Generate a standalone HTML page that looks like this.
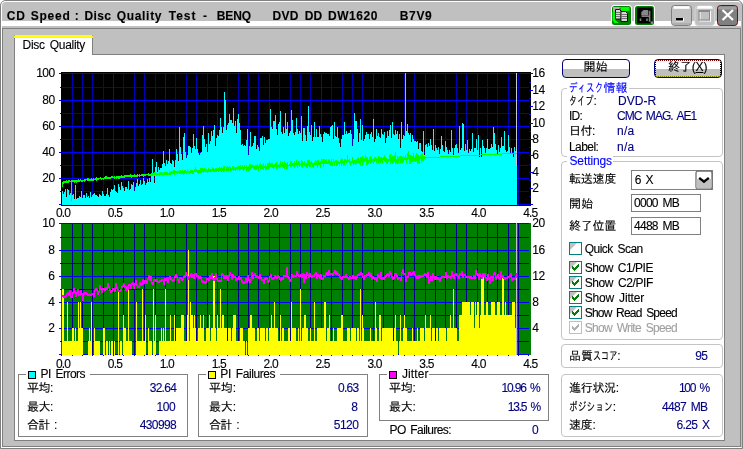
<!DOCTYPE html><html lang="ja"><head><meta charset="utf-8"><title>CD Speed : Disc Quality Test</title><style>
html,body{margin:0;padding:0}
body{width:743px;height:449px;position:relative;overflow:hidden;background:#fff;
font-family:"Liberation Sans","IPAGothic","Noto Sans CJK JP",sans-serif;font-size:12px;line-height:12px;color:#000}
div,span,svg{position:absolute;box-sizing:border-box}
span span{position:static}
.t{white-space:nowrap;line-height:12px;height:12px;word-spacing:2px;-webkit-text-stroke:0.12px}
.gb{border:1px solid #c4c4c4;border-radius:4px}
.sb{border:1px solid #808080}
.ed{border:1px solid #808080;background:#fff}
.cb{width:13px;height:13px;border:1px solid #008080;background:#fff;left:569px;overflow:hidden}
.cb i{position:absolute;left:0;top:0;width:0;height:0;border-top:7px solid #c0c0c0;border-right:7px solid transparent}
.lg{background:#fff;height:12px}
</style></head><body>
<div style="left:0;top:0;width:743px;height:449px;background:#c0c0c0;border-radius:6px 6px 0 0"></div>
<div style="left:0;top:0;width:743px;height:449px;border:1px solid #808080;border-radius:6px 6px 0 0"></div>
<div style="left:1px;top:1px;width:741px;height:447px;border:1px solid #fff;border-right-color:#c0c0c0;border-bottom-color:#fff;border-radius:5px 5px 0 0"></div>
<div style="left:2px;top:21px;width:739px;height:5px;background:#fff"></div>
<div style="left:2px;top:28px;width:739px;height:1px;background:#808080"></div>
<div style="left:2px;top:28px;width:1px;height:419px;background:#808080"></div>
<div style="left:740px;top:28px;width:1px;height:419px;background:#808080"></div>
<div style="left:2px;top:446px;width:739px;height:1px;background:#808080"></div>
<div style="left:14px;top:54px;width:711px;height:387px;background:#fff;border:1px solid #808080;border-left-color:#808080"></div>
<div style="left:14px;top:35px;width:79px;height:20px;background:#fff;border-left:1px solid #808080;border-right:1px solid #808080"></div>
<div style="left:14px;top:35px;width:79px;height:3px;background:#ffff00;border-radius:2px 2px 0 0"></div>
<svg style="left:0;top:0" width="743" height="30" viewBox="0 0 743 30"><rect x="611" y="5" width="21" height="21" rx="3.500" fill="#fff"/><rect x="612" y="6" width="19" height="19" rx="2.500" fill="#008000"/><path d="M613 7h8l-8 8z" fill="#b4a8b4"/><path d="M621 7h8.500v3.500l-3 .5h-5l-1-2zM612.600 12l2.400-1.500v9.500l4 3h-4.500l-1.900-2.500z" fill="#00ff00"/><path d="M615.500 9.500h4l1.500 1.500v8h-5.500z" fill="#d8d8d8" stroke="#101010"/><path d="M621 11.500h4.500l2 2v8h-6.500z" fill="#d8d8d8" stroke="#101010"/><path d="M616 12.500h4M616 14.500h4M616 16.500h4M622 14.500h5M622 16.500h5M622 18.500h5" stroke="#707070"/><rect x="634" y="5" width="21" height="21" rx="3.500" fill="#fff"/><rect x="635" y="6" width="19" height="19" rx="2.500" fill="#008000"/><rect x="637" y="7.500" width="15.500" height="16" fill="#000"/><path d="M643.500 10h4.700v5.400h-6.900v-3.200z" fill="#888"/><path d="M641.500 16.300h8.500M649.600 10.700v11M640.500 18.500v2.500M647 18.500v2.500" stroke="#808080" stroke-width="1.600" fill="none"/><rect x="650.700" y="21.500" width="2.300" height="2.300" fill="#909090"/></svg>
<svg style="left:671px;top:5px" width="22" height="21" viewBox="0 0 22 21"><rect x="0.5" y="0.500" width="20" height="20" rx="3" fill="#c0c0c0" stroke="#808080"/><path d="M2.500 2.500h16" stroke="#fff" stroke-width="2.600"/><path d="M2 19h17" stroke="#a0a0a0" stroke-width="1"/><rect x="5" y="13" width="8" height="3.500" fill="#fff"/><rect x="5" y="13" width="7" height="2.500" fill="#000"/></svg>
<svg style="left:694px;top:5px" width="22" height="21" viewBox="0 0 22 21"><rect x="1" y="1" width="19.500" height="19.500" rx="3" fill="#c0c0c0" stroke="#d4d4d4" stroke-width="1"/><path d="M2.500 3.800c.5-2.300 1.500-2.800 3.500-2.800h9.500c2 0 3 .5 3.500 2.800z" fill="#fff"/><rect x="6" y="6.500" width="10.500" height="9.500" fill="none" stroke="#fff"/><rect x="5" y="5.500" width="10.500" height="9.500" fill="none" stroke="#888"/><path d="M5 6.500h10.500" stroke="#888"/></svg>
<svg style="left:717px;top:5px" width="22" height="21" viewBox="0 0 22 21"><rect x="0.5" y="0.500" width="20" height="20" rx="3" fill="#808080" stroke="#900000"/><rect x="1.500" y="1.500" width="18" height="3" rx="1" fill="#a0a0a0"/><path d="M3 20.500h15" stroke="#800080" stroke-width="1"/><path d="M5.500 5l10.500 10M16 5l-10.500 10" stroke="#fff" stroke-width="2.200" fill="none"/></svg>
<div style="left:562px;top:59px;width:68px;height:19px;border:1px solid #000080;border-radius:4px;background:linear-gradient(#fff 0,#fff 52%,#c0c0c0 52%)"></div>
<div style="left:654px;top:59px;width:68px;height:19px;border:1px solid #000080;border-radius:4px;background:linear-gradient(#fff 0,#fff 52%,#c0c0c0 52%)"></div>
<div style="left:655px;top:60px;width:66px;height:17px;border:1px dotted #000;border-top-color:#800000;border-bottom-color:#808000"></div>
<div class="gb" style="left:561px;top:88px;width:162px;height:69px"></div>
<div class="gb" style="left:561px;top:161px;width:162px;height:179px"></div>
<div class="gb" style="left:561px;top:344px;width:162px;height:24px"></div>
<div class="gb" style="left:561px;top:374px;width:162px;height:63px"></div>
<div class="lg" style="left:567px;top:82px;width:62px"></div>
<div class="lg" style="left:567px;top:156px;width:46px"></div>
<div class="ed" style="left:631px;top:170px;width:82px;height:20px"></div>
<svg style="left:695px;top:170px" width="18" height="20" viewBox="0 0 18 20"><rect x="1" y="1" width="16" height="18" rx="2" fill="#fff" stroke="#707070" stroke-width="1.300" shape-rendering="auto"/><path d="M1.500 9h15v8.500a1 1 0 0 1-1 1h-13a1 1 0 0 1-1-1z" fill="#c0c0c0"/><path d="M4.200 7.800l4.800 4l4.800-4" stroke="#000" stroke-width="2.300" fill="none" shape-rendering="auto"/></svg>
<div class="ed" style="left:631px;top:194px;width:70px;height:18px"></div>
<div class="ed" style="left:631px;top:217px;width:70px;height:18px"></div>
<div class="cb" style="top:242px;"><i></i></div>
<div class="cb" style="top:261px;"><i></i><svg style="left:2px;top:2px" width="7" height="7" viewBox="0 0 7 7"><path d="M0 2h1v1h1v1h1v-1h1v-1h1v-1h1v-1h1v3h-1v1h-1v1h-1v1h-1v1h-1v-1h-1v-1h-1z" fill="#008000"/></svg></div>
<div class="cb" style="top:276px;"><i></i><svg style="left:2px;top:2px" width="7" height="7" viewBox="0 0 7 7"><path d="M0 2h1v1h1v1h1v-1h1v-1h1v-1h1v-1h1v3h-1v1h-1v1h-1v1h-1v1h-1v-1h-1v-1h-1z" fill="#008000"/></svg></div>
<div class="cb" style="top:291px;"><i></i><svg style="left:2px;top:2px" width="7" height="7" viewBox="0 0 7 7"><path d="M0 2h1v1h1v1h1v-1h1v-1h1v-1h1v-1h1v3h-1v1h-1v1h-1v1h-1v1h-1v-1h-1v-1h-1z" fill="#008000"/></svg></div>
<div class="cb" style="top:306px;"><i></i><svg style="left:2px;top:2px" width="7" height="7" viewBox="0 0 7 7"><path d="M0 2h1v1h1v1h1v-1h1v-1h1v-1h1v-1h1v3h-1v1h-1v1h-1v1h-1v1h-1v-1h-1v-1h-1z" fill="#008000"/></svg></div>
<div class="cb" style="top:321px;border-color:#c0c0c0;"><svg style="left:2px;top:2px" width="7" height="7" viewBox="0 0 7 7"><path d="M0 2h1v1h1v1h1v-1h1v-1h1v-1h1v-1h1v3h-1v1h-1v1h-1v1h-1v1h-1v-1h-1v-1h-1z" fill="#b0b0b0"/></svg></div>
<div class="sb" style="left:18px;top:374px;width:170px;height:63px"></div>
<div class="sb" style="left:198px;top:374px;width:170px;height:63px"></div>
<div class="sb" style="left:379px;top:374px;width:170px;height:47px"></div>
<div class="lg" style="left:26px;top:369px;width:64px"></div>
<div style="left:28px;top:371px;width:8px;height:8px;background:#00ffff;border:1px solid #000"></div>
<div class="lg" style="left:206px;top:369px;width:74px"></div>
<div style="left:208px;top:371px;width:8px;height:8px;background:#ffff00;border:1px solid #000"></div>
<div class="lg" style="left:387px;top:369px;width:42px"></div>
<div style="left:389px;top:371px;width:8px;height:8px;background:#ff00ff;border:1px solid #000"></div>
<svg width="743" height="449" viewBox="0 0 743 449" shape-rendering="crispEdges" style="position:absolute;left:0;top:0">
<rect x="61" y="72" width="470" height="134" fill="#000"/>
<path d="M61 87h468v1h-468zM61 113h468v1h-468zM61 139h468v1h-468zM61 165h468v1h-468zM61 191h468v1h-468zM72 73h1v132h-1zM82 73h1v132h-1zM92 73h1v132h-1zM103 73h1v132h-1zM123 73h1v132h-1zM134 73h1v132h-1zM144 73h1v132h-1zM155 73h1v132h-1zM175 73h1v132h-1zM186 73h1v132h-1zM196 73h1v132h-1zM207 73h1v132h-1zM227 73h1v132h-1zM238 73h1v132h-1zM248 73h1v132h-1zM258 73h1v132h-1zM279 73h1v132h-1zM290 73h1v132h-1zM300 73h1v132h-1zM310 73h1v132h-1zM331 73h1v132h-1zM342 73h1v132h-1zM352 73h1v132h-1zM362 73h1v132h-1zM383 73h1v132h-1zM393 73h1v132h-1zM404 73h1v132h-1zM414 73h1v132h-1zM435 73h1v132h-1zM445 73h1v132h-1zM456 73h1v132h-1zM466 73h1v132h-1zM487 73h1v132h-1zM497 73h1v132h-1zM508 73h1v132h-1zM518 73h1v132h-1z" fill="#0000b4"/>
<path d="M61 73h468v1h-468zM61 100h468v1h-468zM61 126h468v1h-468zM61 152h468v1h-468zM61 178h468v1h-468zM61 204h468v1h-468zM113 73h1v132h-1zM165 73h1v132h-1zM217 73h1v132h-1zM269 73h1v132h-1zM321 73h1v132h-1zM373 73h1v132h-1zM425 73h1v132h-1zM477 73h1v132h-1z" fill="#00f"/>
<path d="M59 73h2v1h-2zM60 87h1v1h-1zM59 100h2v1h-2zM60 113h1v1h-1zM59 126h2v1h-2zM60 139h1v1h-1zM59 152h2v1h-2zM60 165h1v1h-1zM59 178h2v1h-2zM60 191h1v1h-1zM59 204h2v1h-2zM529 204h4v1h-4zM529 196h2v1h-2zM529 188h4v1h-4zM529 180h2v1h-2zM529 172h4v1h-4zM529 164h2v1h-2zM529 155h4v1h-4zM529 147h2v1h-2zM529 139h4v1h-4zM529 131h2v1h-2zM529 123h4v1h-4zM529 114h2v1h-2zM529 106h4v1h-4zM529 98h2v1h-2zM529 90h4v1h-4zM529 82h2v1h-2zM529 73h4v1h-4z" fill="#00f"/>
<rect x="516" y="73" width="1" height="132" fill="#c8c8c8"/>
<path d="M62 205V191h1V194h1V192h1V189h1V197h1V189h1V190h1V195h1V193h1h1V195h1V194h1V199h1V185h1V199h1V198h1h1V196h1V197h1V191h1V198h1V195h1h1V198h1V193h1V197h1V196h1V198h1V192h1V197h1V195h1V194h1V193h1V195h1h1V196h1V197h1V194h1V195h1V196h1V191h1V194h1V196h1h1V194h1V188h1V195h1V197h1V192h1V189h1V190h1V189h1V185h1V191h1V192h1V193h1V184h1V187h1V190h1V182h1V186h1V188h1V191h1V187h1h1V189h1V181h1V190h1V189h1V184h1V185h1V182h1V191h1V187h1V183h1V179h1V186h1V184h1V180h1V185h1V184h1V178h1V181h1V185h1V183h1V179h1V182h1V178h1V182h1V176h1V159h1V175h1V183h1V167h1V162h1V172h1V167h1V170h1V168h1h1V164h1V151h1V163h1V166h1V160h1V164h1V161h1V149h1V163h1V164h1V160h1V161h1V167h1V160h1V149h1V154h1V161h1V127h1V147h1V154h1V160h1V137h1V133h1V152h1V158h1V155h1V146h1h1V147h1V153h1V148h1V134h1V146h1V149h1V138h1V149h1V153h1V155h1V153h1V152h1V135h1V126h1V139h1V147h1V144h1V152h1V133h1V144h1V141h1V131h1V136h1V130h1V125h1V146h1V138h1V135h1V136h1V130h1V118h1V127h1V133h1V127h1V92h1V100h1V130h1V125h1V123h1V114h1V120h1h1V123h1V108h1V126h1V121h1V133h1V119h1V114h1V123h1V130h1V145h1V144h1V146h1V145h1V146h1V140h1V129h1V155h1V146h1V132h1V147h1V146h1V143h1V136h1h1V149h1V145h1V147h1V151h1V138h1h1V136h1V145h1V137h1V143h1V140h1h1V139h1h1V109h1V127h1V129h1V121h1h1V115h1V129h1V135h1V124h1V122h1V111h1V132h1V134h1V127h1V133h1V113h1V129h1V122h1V136h1V133h1V131h1V110h1V120h1V133h1V135h1V132h1V118h1V129h1V134h1V131h1V133h1V116h1V141h1V128h1h1V135h1V141h1V126h1V106h1V132h1V135h1V125h1V141h1V137h1V122h1V137h1V129h1V137h1h1V126h1V134h1V137h1V142h1V134h1V132h1V133h1h1V134h1h1V136h1V127h1V126h1V125h1V139h1V122h1V136h1V137h1V127h1V138h1V143h1V147h1V139h1V135h1h1V122h1V134h1V131h1V134h1V133h1h1V130h1V134h1V146h1V139h1V113h1V121h1h1V129h1V142h1V133h1V119h1V140h1V125h1V141h1V139h1V135h1V132h1V134h1h1V139h1V134h1V132h1V137h1V119h1V142h1V139h1V129h1V136h1V133h1V137h1V138h1V129h1V134h1V135h1V132h1V143h1V138h1V131h1V136h1V130h1V125h1V138h1V122h1V134h1V135h1V130h1V134h1V131h1V139h1V134h1V148h1V122h1V139h1V135h1V136h1V73h1V131h1V124h1V133h1V135h1V133h1V142h1V135h1V139h1V141h1h1V142h1V141h1V149h1V143h1h1V151h1V152h1V131h1V155h1V145h1V144h1V147h1V143h1V146h1V139h1V145h1V150h1V129h1V151h1V145h1V148h1V150h1V147h1V154h1V149h1V136h1V145h1V151h1V152h1V141h1V147h1V150h1V154h1V150h1V152h1V130h1V148h1V155h1V148h1V145h1V144h1V148h1V153h1V126h1V150h1V148h1V123h1V124h1V151h1V144h1V150h1V140h1V153h1V149h1V151h1V149h1V133h1V152h1V148h1h1V139h1V150h1V135h1V157h1V148h1V157h1V140h1V146h1V148h1V153h1V148h1V139h1V149h1h1V148h1V144h1V147h1V127h1V133h1V144h1V150h1V154h1V145h1V152h1V148h1V137h1V146h1h1V131h1V150h1V152h1V151h1V135h1V147h1V153h1V148h1V153h1V157h1V147h1V151h1V166h1V205z" fill="#0ff"/>
<path d="M62 182h1v5h-1zM63 181h1v3h-1zM64 181h1v2h-1zM65 181h1v2h-1zM66 180h1v3h-1zM67 181h1v2h-1zM68 180h1v3h-1zM69 180h1v2h-1zM70 181h1v1h-1zM71 180h1v3h-1zM72 180h1v2h-1zM73 180h1v2h-1zM74 180h1v3h-1zM75 180h1v2h-1zM76 180h1v3h-1zM77 180h1v2h-1zM78 179h1v3h-1zM79 180h1v2h-1zM80 179h1v2h-1zM81 180h1v2h-1zM82 180h1v2h-1zM83 180h1v1h-1zM84 179h1v3h-1zM85 179h1v2h-1zM86 179h1v1h-1zM87 178h1v3h-1zM88 178h1v3h-1zM89 179h1v2h-1zM90 179h1v2h-1zM91 178h1v3h-1zM92 179h1v2h-1zM93 178h1v3h-1zM94 179h1v1h-1zM95 178h1v2h-1zM96 177h1v4h-1zM97 178h1v2h-1zM98 178h1v2h-1zM99 178h1v1h-1zM100 177h1v2h-1zM101 178h1v2h-1zM102 178h1v1h-1zM103 178h1v2h-1zM104 177h1v2h-1zM105 176h1v3h-1zM106 176h1v3h-1zM107 177h1v2h-1zM108 177h1v2h-1zM109 177h1v2h-1zM110 177h1v2h-1zM111 176h1v2h-1zM112 176h1v2h-1zM113 177h1v1h-1zM114 176h1v3h-1zM115 177h1v1h-1zM116 176h1v3h-1zM117 176h1v2h-1zM118 176h1v3h-1zM119 176h1v3h-1zM120 176h1v2h-1zM121 175h1v3h-1zM122 176h1v2h-1zM123 176h1v2h-1zM124 175h1v3h-1zM125 175h1v2h-1zM126 175h1v2h-1zM127 175h1v2h-1zM128 175h1v2h-1zM129 175h1v2h-1zM130 174h1v3h-1zM131 175h1v3h-1zM132 175h1v2h-1zM133 175h1v2h-1zM134 174h1v3h-1zM135 175h1v2h-1zM136 175h1v2h-1zM137 174h1v3h-1zM138 175h1v1h-1zM139 174h1v3h-1zM140 175h1v1h-1zM141 174h1v2h-1zM142 174h1v2h-1zM143 174h1v3h-1zM144 174h1v2h-1zM145 174h1v2h-1zM146 174h1v1h-1zM147 174h1v1h-1zM148 173h1v3h-1zM149 174h1v2h-1zM150 174h1v2h-1zM151 173h1v3h-1zM152 173h1v3h-1zM153 173h1v2h-1zM154 172h1v4h-1zM155 172h1v3h-1zM156 173h1v3h-1zM157 173h1v2h-1zM158 173h1v2h-1zM159 172h1v4h-1zM160 172h1v3h-1zM161 172h1v3h-1zM162 173h1v2h-1zM163 172h1v3h-1zM164 172h1v3h-1zM165 172h1v3h-1zM166 172h1v3h-1zM167 172h1v3h-1zM168 173h1v2h-1zM169 171h1v4h-1zM170 172h1v3h-1zM171 171h1v3h-1zM172 171h1v3h-1zM173 170h1v4h-1zM174 170h1v5h-1zM175 171h1v2h-1zM176 171h1v2h-1zM177 171h1v3h-1zM178 171h1v2h-1zM179 170h1v4h-1zM180 170h1v4h-1zM181 171h1v3h-1zM182 170h1v4h-1zM183 171h1v4h-1zM184 170h1v4h-1zM185 170h1v3h-1zM186 171h1v3h-1zM187 169h1v4h-1zM188 171h1v2h-1zM189 171h1v3h-1zM190 170h1v3h-1zM191 170h1v3h-1zM192 170h1v4h-1zM193 171h1v3h-1zM194 169h1v3h-1zM195 167h1v5h-1zM196 169h1v3h-1zM197 170h1v3h-1zM198 170h1v4h-1zM199 170h1v3h-1zM200 168h1v5h-1zM201 168h1v5h-1zM202 168h1v4h-1zM203 169h1v4h-1zM204 168h1v4h-1zM205 169h1v3h-1zM206 169h1v3h-1zM207 170h1v3h-1zM208 168h1v4h-1zM209 169h1v3h-1zM210 169h1v3h-1zM211 169h1v3h-1zM212 167h1v4h-1zM213 168h1v4h-1zM214 169h1v3h-1zM215 168h1v4h-1zM216 168h1v4h-1zM217 169h1v2h-1zM218 168h1v4h-1zM219 167h1v4h-1zM220 168h1v3h-1zM221 167h1v5h-1zM222 168h1v3h-1zM223 166h1v6h-1zM224 166h1v5h-1zM225 169h1v1h-1zM226 167h1v4h-1zM227 166h1v5h-1zM228 167h1v4h-1zM229 166h1v4h-1zM230 167h1v4h-1zM231 168h1v3h-1zM232 166h1v4h-1zM233 166h1v5h-1zM234 167h1v3h-1zM235 167h1v4h-1zM236 167h1v3h-1zM237 166h1v4h-1zM238 166h1v3h-1zM239 166h1v5h-1zM240 165h1v5h-1zM241 167h1v2h-1zM242 165h1v4h-1zM243 167h1v4h-1zM244 165h1v4h-1zM245 167h1v1h-1zM246 165h1v6h-1zM247 167h1v3h-1zM248 166h1v5h-1zM249 164h1v6h-1zM250 164h1v6h-1zM251 165h1v3h-1zM252 165h1v3h-1zM253 165h1v4h-1zM254 166h1v4h-1zM255 165h1v5h-1zM256 165h1v5h-1zM257 164h1v5h-1zM258 166h1v5h-1zM259 164h1v4h-1zM260 163h1v7h-1zM261 165h1v4h-1zM262 165h1v4h-1zM263 163h1v7h-1zM264 166h1v2h-1zM265 164h1v6h-1zM266 166h1v4h-1zM267 163h1v6h-1zM268 163h1v6h-1zM269 161h1v7h-1zM270 163h1v4h-1zM271 163h1v4h-1zM272 163h1v5h-1zM273 165h1v4h-1zM274 164h1v3h-1zM275 163h1v4h-1zM276 162h1v7h-1zM277 164h1v4h-1zM278 165h1v2h-1zM279 164h1v4h-1zM280 161h1v6h-1zM281 164h1v2h-1zM282 162h1v5h-1zM283 164h1v4h-1zM284 161h1v8h-1zM285 163h1v4h-1zM286 163h1v6h-1zM287 162h1v7h-1zM288 165h1v1h-1zM289 164h1v2h-1zM290 161h1v6h-1zM291 161h1v5h-1zM292 163h1v3h-1zM293 163h1v4h-1zM294 161h1v7h-1zM295 163h1v3h-1zM296 160h1v6h-1zM297 163h1v5h-1zM298 161h1v4h-1zM299 161h1v6h-1zM300 164h1v1h-1zM301 160h1v7h-1zM302 161h1v7h-1zM303 163h1v2h-1zM304 161h1v5h-1zM305 164h1v3h-1zM306 163h1v5h-1zM307 160h1v8h-1zM308 160h1v6h-1zM309 160h1v7h-1zM310 162h1v5h-1zM311 161h1v4h-1zM312 163h1v4h-1zM313 163h1v5h-1zM314 162h1v3h-1zM315 160h1v5h-1zM316 161h1v4h-1zM317 160h1v8h-1zM318 160h1v5h-1zM319 162h1v3h-1zM320 161h1v7h-1zM321 159h1v5h-1zM322 159h1v5h-1zM323 159h1v8h-1zM324 159h1v5h-1zM325 160h1v4h-1zM326 159h1v5h-1zM327 162h1v2h-1zM328 159h1v5h-1zM329 160h1v5h-1zM330 161h1v5h-1zM331 159h1v7h-1zM332 162h1v4h-1zM333 159h1v4h-1zM334 161h1v5h-1zM335 160h1v3h-1zM336 160h1v6h-1zM337 161h1v5h-1zM338 161h1v3h-1zM339 162h1v3h-1zM340 160h1v3h-1zM341 158h1v8h-1zM342 159h1v5h-1zM343 161h1v5h-1zM344 159h1v6h-1zM345 159h1v3h-1zM346 160h1v3h-1zM347 155h1v7h-1zM348 160h1v2h-1zM349 159h1v5h-1zM350 161h1v5h-1zM351 161h1v2h-1zM352 157h1v6h-1zM353 160h1v5h-1zM354 160h1v4h-1zM355 160h1v5h-1zM356 159h1v5h-1zM357 158h1v5h-1zM358 157h1v6h-1zM359 159h1v5h-1zM360 157h1v9h-1zM361 157h1v5h-1zM362 156h1v10h-1zM363 159h1v5h-1zM364 158h1v4h-1zM365 155h1v6h-1zM366 157h1v8h-1zM367 157h1v8h-1zM368 160h1v4h-1zM369 157h1v5h-1zM370 156h1v8h-1zM371 158h1v5h-1zM372 159h1v3h-1zM373 159h1v5h-1zM374 157h1v5h-1zM375 157h1v4h-1zM376 158h1v5h-1zM377 159h1v2h-1zM378 156h1v7h-1zM379 157h1v5h-1zM380 157h1v6h-1zM381 157h1v5h-1zM382 158h1v5h-1zM383 157h1v3h-1zM384 155h1v6h-1zM385 157h1v5h-1zM386 158h1v6h-1zM387 159h1v5h-1zM388 159h1v3h-1zM389 155h1v6h-1zM390 154h1v10h-1zM391 157h1v5h-1zM392 156h1v8h-1zM393 156h1v7h-1zM394 155h1v7h-1zM395 152h1v12h-1zM396 159h1v4h-1zM397 156h1v8h-1zM398 157h1v6h-1zM399 156h1v5h-1zM400 156h1v7h-1zM401 156h1v6h-1zM402 157h1v6h-1zM403 156h1v6h-1zM404 157h1v3h-1zM405 155h1v5h-1zM406 157h1v6h-1zM407 153h1v7h-1zM408 151h1v8h-1zM409 155h1v9h-1zM410 155h1v9h-1zM411 155h1v7h-1zM412 156h1v6h-1zM413 153h1v9h-1zM414 157h1v4h-1zM415 155h1v7h-1zM416 153h1v8h-1zM417 154h1v10h-1zM418 155h1v8h-1zM419 156h1v8h-1zM420 155h1v4h-1zM421 154h1v9h-1zM422 153h1v8h-1zM423 156h1v5h-1zM424 156h1v3h-1zM425 157h1v1h-1zM426 157h1v1h-1zM427 157h1v1h-1zM428 157h1v1h-1zM429 157h1v1h-1zM430 157h1v1h-1zM431 157h1v1h-1zM432 157h1v1h-1zM433 157h1v1h-1zM434 157h1v1h-1zM435 157h1v1h-1zM436 157h1v1h-1zM437 157h1v1h-1zM438 157h1v1h-1zM439 157h1v1h-1zM440 156h1v1h-1zM441 156h1v1h-1zM442 156h1v1h-1zM443 156h1v1h-1zM444 156h1v1h-1zM445 156h1v1h-1zM446 156h1v1h-1zM447 156h1v1h-1zM448 156h1v1h-1zM449 156h1v1h-1zM450 156h1v1h-1zM451 156h1v1h-1zM452 156h1v1h-1zM453 156h1v1h-1zM454 156h1v1h-1zM455 156h1v1h-1zM456 156h1v1h-1zM457 156h1v1h-1zM458 156h1v1h-1zM459 156h1v1h-1zM460 155h1v1h-1zM461 155h1v1h-1zM462 155h1v1h-1zM463 155h1v1h-1zM464 155h1v1h-1zM465 155h1v1h-1zM466 155h1v1h-1zM467 155h1v1h-1zM468 155h1v1h-1zM469 155h1v1h-1zM470 155h1v1h-1zM471 155h1v1h-1zM472 155h1v1h-1zM473 155h1v1h-1zM474 155h1v1h-1zM475 155h1v1h-1zM476 155h1v1h-1zM477 155h1v1h-1zM478 155h1v1h-1zM479 155h1v1h-1zM480 155h1v1h-1zM481 154h1v1h-1zM482 154h1v1h-1zM483 154h1v1h-1zM484 154h1v1h-1zM485 154h1v1h-1zM486 154h1v1h-1zM487 154h1v1h-1zM488 154h1v1h-1zM489 154h1v1h-1zM490 154h1v1h-1zM491 154h1v1h-1zM492 154h1v1h-1zM493 154h1v1h-1zM494 154h1v1h-1zM495 154h1v1h-1zM496 154h1v1h-1zM497 154h1v1h-1zM498 154h1v1h-1zM499 154h1v1h-1zM500 154h1v1h-1zM501 154h1v1h-1zM502 153h1v1h-1zM503 153h1v1h-1zM504 153h1v1h-1zM505 153h1v1h-1zM506 153h1v1h-1zM507 153h1v1h-1zM508 153h1v1h-1zM509 153h1v1h-1zM510 153h1v1h-1zM511 153h1v1h-1zM512 153h1v1h-1zM513 153h1v1h-1zM514 153h1v1h-1zM515 153h1v1h-1zM516 153h1v1h-1zM71 182h1v19h-1z" fill="#0f0"/>
<rect x="61" y="72" width="1" height="134" fill="#000"/>
<rect x="61" y="205" width="470" height="1" fill="#000"/>
<path d="M72 205h1v1h-1zM82 205h1v1h-1zM92 205h1v1h-1zM103 205h1v1h-1zM123 205h1v1h-1zM134 205h1v1h-1zM144 205h1v1h-1zM155 205h1v1h-1zM175 205h1v1h-1zM186 205h1v1h-1zM196 205h1v1h-1zM207 205h1v1h-1zM227 205h1v1h-1zM238 205h1v1h-1zM248 205h1v1h-1zM258 205h1v1h-1zM279 205h1v1h-1zM290 205h1v1h-1zM300 205h1v1h-1zM310 205h1v1h-1zM331 205h1v1h-1zM342 205h1v1h-1zM352 205h1v1h-1zM362 205h1v1h-1zM383 205h1v1h-1zM393 205h1v1h-1zM404 205h1v1h-1zM414 205h1v1h-1zM435 205h1v1h-1zM445 205h1v1h-1zM456 205h1v1h-1zM466 205h1v1h-1zM487 205h1v1h-1zM497 205h1v1h-1zM508 205h1v1h-1zM518 205h1v1h-1z" fill="#0000a0"/><path d="M113 205h1v1h-1zM165 205h1v1h-1zM217 205h1v1h-1zM269 205h1v1h-1zM321 205h1v1h-1zM373 205h1v1h-1zM425 205h1v1h-1zM477 205h1v1h-1z" fill="#00f"/>
<rect x="61" y="223" width="470" height="132" fill="#008000"/>
<path d="M61 237h468v1h-468zM61 263h468v1h-468zM61 289h468v1h-468zM61 315h468v1h-468zM61 341h468v1h-468zM72 223h1v132h-1zM82 223h1v132h-1zM92 223h1v132h-1zM103 223h1v132h-1zM123 223h1v132h-1zM134 223h1v132h-1zM144 223h1v132h-1zM155 223h1v132h-1zM175 223h1v132h-1zM186 223h1v132h-1zM196 223h1v132h-1zM207 223h1v132h-1zM227 223h1v132h-1zM238 223h1v132h-1zM248 223h1v132h-1zM258 223h1v132h-1zM279 223h1v132h-1zM290 223h1v132h-1zM300 223h1v132h-1zM310 223h1v132h-1zM331 223h1v132h-1zM342 223h1v132h-1zM352 223h1v132h-1zM362 223h1v132h-1zM383 223h1v132h-1zM393 223h1v132h-1zM404 223h1v132h-1zM414 223h1v132h-1zM435 223h1v132h-1zM445 223h1v132h-1zM456 223h1v132h-1zM466 223h1v132h-1zM487 223h1v132h-1zM497 223h1v132h-1zM508 223h1v132h-1zM518 223h1v132h-1z" fill="#00008c"/>
<path d="M61 223h468v1h-468zM61 250h468v1h-468zM61 276h468v1h-468zM61 302h468v1h-468zM61 328h468v1h-468zM61 354h468v1h-468zM113 223h1v132h-1zM165 223h1v132h-1zM217 223h1v132h-1zM269 223h1v132h-1zM321 223h1v132h-1zM373 223h1v132h-1zM425 223h1v132h-1zM477 223h1v132h-1z" fill="#00f"/>
<path d="M59 223h2v1h-2zM60 237h1v1h-1zM59 250h2v1h-2zM60 263h1v1h-1zM59 276h2v1h-2zM60 289h1v1h-1zM59 302h2v1h-2zM60 315h1v1h-1zM59 328h2v1h-2zM60 341h1v1h-1zM59 354h2v1h-2z" fill="#00f"/>
<path d="M61 355h1v1h-1zM72 355h1v1h-1zM82 355h1v1h-1zM92 355h1v1h-1zM103 355h1v1h-1zM113 355h1v1h-1zM123 355h1v1h-1zM134 355h1v1h-1zM144 355h1v1h-1zM155 355h1v1h-1zM165 355h1v1h-1zM175 355h1v1h-1zM186 355h1v1h-1zM196 355h1v1h-1zM207 355h1v1h-1zM217 355h1v1h-1zM227 355h1v1h-1zM238 355h1v1h-1zM248 355h1v1h-1zM258 355h1v1h-1zM269 355h1v1h-1zM279 355h1v1h-1zM290 355h1v1h-1zM300 355h1v1h-1zM310 355h1v1h-1zM321 355h1v1h-1zM331 355h1v1h-1zM342 355h1v1h-1zM352 355h1v1h-1zM362 355h1v1h-1zM373 355h1v1h-1zM383 355h1v1h-1zM393 355h1v1h-1zM404 355h1v1h-1zM414 355h1v1h-1zM425 355h1v1h-1zM435 355h1v1h-1zM445 355h1v1h-1zM456 355h1v1h-1zM466 355h1v1h-1zM477 355h1v1h-1zM487 355h1v1h-1zM497 355h1v1h-1zM508 355h1v1h-1zM518 355h1v1h-1zM528 355h1v1h-1z" fill="#0000a0"/>
<path d="M62 355V289h1h1V341h1h1h1V302h1V341h1h1h1h1V328h1h1V341h1V328h1V341h1h1V302h1V328h1V302h1V328h1h1V355zM88 355V341h1V328h1V341h1V302h1V355zM94 355V328h1V341h1h1h1h1h1V355zM103 355V328h1h1V355zM106 355V341h1h1V355zM109 355V341h1V355zM111 355V341h1h1V355zM114 355V341h1V355zM118 355V289h1V355zM120 355V341h1h1V355zM123 355V315h1V328h1h1V341h1h1V289h1V341h1h1h1V355zM136 355V302h1V341h1h1h1h1h1V289h1V341h1h1V315h1V355zM148 355V328h1V341h1h1h1V355zM153 355V289h1V341h1V315h1V355zM159 355V341h1h1V328h1V341h1V328h1V341h1V289h1V341h1h1h1h1V315h1V341h1h1h1V315h1V341h1V328h1h1h1h1h1V315h1h1h1V341h1h1h1V315h1V250h1V341h1V302h1V315h1h1V328h1V315h1V328h1V341h1h1V328h1h1V315h1V328h1h1V315h1V341h1h1V328h1h1h1V315h1V341h1V328h1h1V276h1h1V328h1V341h1V315h1V328h1h1V289h1V328h1V315h1h1V328h1h1h1V341h1V328h1h1h1V341h1V328h1V315h1h1h1V341h1h1h1h1V328h1h1h1V341h1h1V355zM246 355V341h1V355zM248 355V328h1h1V315h1h1V328h1h1h1V341h1h1V328h1h1V341h1V328h1h1h1h1h1V341h1V328h1h1V341h1V328h1h1V315h1V328h1h1V302h1V328h1h1h1V341h1h1V315h1V341h1V328h1h1V341h1h1h1h1V328h1h1V341h1V302h1V328h1h1h1h1V341h1h1V328h1V341h1V289h1V341h1V328h1h1V315h1h1V328h1h1V341h1h1V328h1V341h1h1h1V302h1V341h1h1V328h1h1h1h1h1h1h1V302h1h1V341h1V328h1h1V315h1V341h1h1h1V328h1V341h1h1h1V328h1h1h1h1V315h1h1V341h1h1h1h1V328h1h1h1V341h1V328h1h1h1h1h1V341h1V328h1h1V341h1V289h1V341h1V315h1V328h1V341h1h1h1h1h1h1V328h1V341h1h1h1h1V302h1V328h1V341h1h1V315h1h1V341h1V328h1h1h1h1h1h1h1h1h1h1h1V341h1V328h1V315h1V341h1h1V355zM399 355V341h1V315h1V341h1h1V328h1V315h1V328h1h1V341h1h1h1h1h1V328h1V341h1h1h1h1V328h1V341h1h1V328h1h1h1h1V341h1V315h1V328h1h1h1h1V315h1V341h1V328h1h1h1V341h1V328h1h1V341h1V328h1h1h1h1h1h1h1V341h1V328h1h1h1V315h1V328h1h1V289h1V328h1h1h1V341h1h1V315h1h1h1V302h1h1h1h1h1h1h1h1V315h1V302h1h1h1V328h1V302h1V315h1V302h1h1V328h1V315h1V276h1h1h1V315h1h1V302h1h1V315h1h1h1V302h1h1h1h1V315h1h1V302h1h1h1V315h1h1V276h1h1V315h1V302h1V315h1h1h1h1h1h1V302h1h1h1V328h1V341h1V355z" fill="#ff0"/>
<rect x="516" y="223" width="1" height="132" fill="#c0c0c0"/>
<path d="M62 295h1v2h-1zM63 295h1v3h-1zM64 296h1v2h-1zM65 295h1v3h-1zM66 293h1v4h-1zM67 292h1v3h-1zM68 292h1v4h-1zM69 290h1v6h-1zM70 290h1v8h-1zM71 296h1v2h-1zM72 292h1v6h-1zM73 288h1v6h-1zM74 288h1v5h-1zM75 291h1v6h-1zM76 292h1v5h-1zM77 289h1v5h-1zM78 289h1v7h-1zM79 294h1v2h-1zM80 290h1v6h-1zM81 290h1v5h-1zM82 293h1v8h-1zM83 293h1v8h-1zM84 292h1v3h-1zM85 292h1v2h-1zM86 292h1v3h-1zM87 293h1v3h-1zM88 294h1v2h-1zM89 294h1v2h-1zM90 294h1v2h-1zM91 293h1v3h-1zM92 293h1v2h-1zM93 293h1v4h-1zM94 289h1v8h-1zM95 288h1v3h-1zM96 288h1v3h-1zM97 289h1v6h-1zM98 291h1v4h-1zM99 285h1v8h-1zM100 285h1v5h-1zM101 288h1v5h-1zM102 288h1v5h-1zM103 288h1v2h-1zM104 288h1v3h-1zM105 287h1v4h-1zM106 287h1v3h-1zM107 283h1v7h-1zM108 283h1v5h-1zM109 286h1v5h-1zM110 289h1v4h-1zM111 290h1v3h-1zM112 288h1v4h-1zM113 288h1v2h-1zM114 288h1v4h-1zM115 283h1v9h-1zM116 283h1v6h-1zM117 287h1v4h-1zM118 289h1v3h-1zM119 290h1v2h-1zM120 289h1v3h-1zM121 286h1v5h-1zM122 285h1v3h-1zM123 283h1v4h-1zM124 283h1v5h-1zM125 286h1v5h-1zM126 286h1v5h-1zM127 286h1v4h-1zM128 284h1v6h-1zM129 284h1v2h-1zM130 284h1v5h-1zM131 283h1v6h-1zM132 282h1v3h-1zM133 282h1v7h-1zM134 283h1v6h-1zM135 280h1v5h-1zM136 280h1v6h-1zM137 284h1v4h-1zM138 286h1v2h-1zM139 282h1v6h-1zM140 282h1v4h-1zM141 283h1v3h-1zM142 279h1v6h-1zM143 279h1v5h-1zM144 280h1v4h-1zM145 280h1v2h-1zM146 280h1v4h-1zM147 278h1v6h-1zM148 275h1v5h-1zM149 275h1v6h-1zM150 276h1v5h-1zM151 276h1v8h-1zM152 282h1v3h-1zM153 279h1v6h-1zM154 279h1v2h-1zM155 279h1v3h-1zM156 279h1v3h-1zM157 279h1v4h-1zM158 281h1v2h-1zM159 280h1v3h-1zM160 280h1v2h-1zM161 279h1v3h-1zM162 279h1v2h-1zM163 279h1v6h-1zM164 278h1v7h-1zM165 278h1v3h-1zM166 277h1v4h-1zM167 277h1v6h-1zM168 277h1v6h-1zM169 276h1v3h-1zM170 276h1v4h-1zM171 278h1v3h-1zM172 279h1v3h-1zM173 279h1v3h-1zM174 276h1v5h-1zM175 274h1v4h-1zM176 274h1v4h-1zM177 276h1v5h-1zM178 279h1v4h-1zM179 277h1v6h-1zM180 277h1v2h-1zM181 277h1v4h-1zM182 278h1v3h-1zM183 276h1v4h-1zM184 275h1v3h-1zM185 272h1v5h-1zM186 272h1v4h-1zM187 274h1v6h-1zM188 276h1v4h-1zM189 275h1v3h-1zM190 273h1v4h-1zM191 273h1v5h-1zM192 274h1v4h-1zM193 274h1v5h-1zM194 273h1v6h-1zM195 273h1v2h-1zM196 273h1v4h-1zM197 275h1v2h-1zM198 275h1v4h-1zM199 276h1v3h-1zM200 276h1v3h-1zM201 277h1v5h-1zM202 280h1v3h-1zM203 281h1v2h-1zM204 281h1v3h-1zM205 281h1v3h-1zM206 278h1v5h-1zM207 278h1v2h-1zM208 278h1v3h-1zM209 275h1v6h-1zM210 275h1v4h-1zM211 273h1v6h-1zM212 273h1v7h-1zM213 278h1v3h-1zM214 277h1v4h-1zM215 273h1v6h-1zM216 273h1v7h-1zM217 278h1v4h-1zM218 280h1v2h-1zM219 280h1v2h-1zM220 280h1v2h-1zM221 273h1v9h-1zM222 273h1v3h-1zM223 274h1v5h-1zM224 275h1v4h-1zM225 275h1v4h-1zM226 275h1v4h-1zM227 275h1v6h-1zM228 275h1v6h-1zM229 272h1v5h-1zM230 272h1v4h-1zM231 274h1v6h-1zM232 274h1v6h-1zM233 274h1v4h-1zM234 276h1v2h-1zM235 276h1v5h-1zM236 278h1v3h-1zM237 278h1v2h-1zM238 276h1v4h-1zM239 276h1v4h-1zM240 277h1v3h-1zM241 277h1v5h-1zM242 280h1v4h-1zM243 282h1v2h-1zM244 281h1v3h-1zM245 278h1v5h-1zM246 278h1v5h-1zM247 275h1v8h-1zM248 275h1v6h-1zM249 279h1v4h-1zM250 279h1v4h-1zM251 272h1v9h-1zM252 272h1v7h-1zM253 274h1v5h-1zM254 273h1v3h-1zM255 273h1v5h-1zM256 275h1v3h-1zM257 275h1v3h-1zM258 276h1v3h-1zM259 274h1v5h-1zM260 274h1v5h-1zM261 277h1v4h-1zM262 279h1v2h-1zM263 279h1v5h-1zM264 278h1v6h-1zM265 277h1v3h-1zM266 277h1v3h-1zM267 278h1v5h-1zM268 280h1v3h-1zM269 276h1v6h-1zM270 274h1v4h-1zM271 274h1v6h-1zM272 278h1v2h-1zM273 277h1v3h-1zM274 275h1v4h-1zM275 275h1v3h-1zM276 276h1v3h-1zM277 275h1v4h-1zM278 275h1v3h-1zM279 276h1v4h-1zM280 278h1v3h-1zM281 277h1v4h-1zM282 277h1v3h-1zM283 275h1v5h-1zM284 275h1v2h-1zM285 275h1v2h-1zM286 267h1v10h-1zM287 267h1v11h-1zM288 276h1v3h-1zM289 277h1v5h-1zM290 279h1v3h-1zM291 274h1v7h-1zM292 274h1v4h-1zM293 275h1v3h-1zM294 275h1v2h-1zM295 275h1v2h-1zM296 271h1v6h-1zM297 271h1v5h-1zM298 274h1v3h-1zM299 275h1v2h-1zM300 274h1v3h-1zM301 274h1v4h-1zM302 273h1v5h-1zM303 273h1v10h-1zM304 274h1v9h-1zM305 274h1v5h-1zM306 272h1v7h-1zM307 272h1v4h-1zM308 274h1v4h-1zM309 273h1v5h-1zM310 273h1v4h-1zM311 275h1v3h-1zM312 275h1v3h-1zM313 275h1v2h-1zM314 273h1v4h-1zM315 272h1v3h-1zM316 272h1v7h-1zM317 274h1v5h-1zM318 274h1v3h-1zM319 275h1v4h-1zM320 274h1v5h-1zM321 274h1v6h-1zM322 278h1v2h-1zM323 275h1v5h-1zM324 275h1v2h-1zM325 273h1v4h-1zM326 272h1v3h-1zM327 272h1v4h-1zM328 270h1v6h-1zM329 270h1v5h-1zM330 273h1v2h-1zM331 273h1v2h-1zM332 273h1v3h-1zM333 272h1v4h-1zM334 270h1v4h-1zM335 270h1v5h-1zM336 271h1v4h-1zM337 271h1v4h-1zM338 273h1v3h-1zM339 274h1v4h-1zM340 276h1v3h-1zM341 277h1v3h-1zM342 276h1v4h-1zM343 276h1v2h-1zM344 276h1v2h-1zM345 274h1v4h-1zM346 274h1v4h-1zM347 276h1v3h-1zM348 277h1v3h-1zM349 276h1v4h-1zM350 276h1v3h-1zM351 277h1v2h-1zM352 275h1v4h-1zM353 275h1v4h-1zM354 276h1v3h-1zM355 276h1v4h-1zM356 276h1v4h-1zM357 274h1v4h-1zM358 274h1v2h-1zM359 273h1v3h-1zM360 272h1v3h-1zM361 272h1v3h-1zM362 273h1v5h-1zM363 276h1v4h-1zM364 275h1v5h-1zM365 275h1v2h-1zM366 274h1v3h-1zM367 274h1v2h-1zM368 272h1v4h-1zM369 272h1v5h-1zM370 273h1v4h-1zM371 273h1v7h-1zM372 276h1v4h-1zM373 276h1v3h-1zM374 277h1v3h-1zM375 277h1v3h-1zM376 277h1v5h-1zM377 274h1v8h-1zM378 274h1v4h-1zM379 276h1v3h-1zM380 272h1v7h-1zM381 272h1v8h-1zM382 277h1v3h-1zM383 277h1v3h-1zM384 276h1v4h-1zM385 275h1v3h-1zM386 274h1v3h-1zM387 273h1v3h-1zM388 273h1v4h-1zM389 271h1v6h-1zM390 271h1v4h-1zM391 273h1v5h-1zM392 276h1v4h-1zM393 277h1v3h-1zM394 273h1v6h-1zM395 273h1v2h-1zM396 273h1v4h-1zM397 275h1v5h-1zM398 277h1v3h-1zM399 277h1v2h-1zM400 277h1v4h-1zM401 272h1v9h-1zM402 269h1v5h-1zM403 269h1v6h-1zM404 273h1v2h-1zM405 273h1v9h-1zM406 276h1v6h-1zM407 276h1v2h-1zM408 272h1v6h-1zM409 272h1v2h-1zM410 272h1v4h-1zM411 273h1v3h-1zM412 272h1v3h-1zM413 271h1v3h-1zM414 271h1v5h-1zM415 274h1v4h-1zM416 276h1v3h-1zM417 275h1v4h-1zM418 275h1v4h-1zM419 275h1v4h-1zM420 275h1v3h-1zM421 275h1v3h-1zM422 275h1v2h-1zM423 274h1v3h-1zM424 273h1v3h-1zM425 273h1v3h-1zM426 274h1v4h-1zM427 272h1v6h-1zM428 272h1v12h-1zM429 279h1v5h-1zM430 276h1v5h-1zM431 276h1v5h-1zM432 273h1v8h-1zM433 273h1v5h-1zM434 276h1v4h-1zM435 276h1v4h-1zM436 276h1v4h-1zM437 277h1v3h-1zM438 277h1v3h-1zM439 278h1v4h-1zM440 277h1v5h-1zM441 276h1v3h-1zM442 276h1v2h-1zM443 276h1v2h-1zM444 276h1v2h-1zM445 272h1v6h-1zM446 272h1v7h-1zM447 275h1v4h-1zM448 275h1v3h-1zM449 276h1v2h-1zM450 276h1v3h-1zM451 271h1v8h-1zM452 271h1v6h-1zM453 275h1v4h-1zM454 274h1v5h-1zM455 273h1v3h-1zM456 273h1v3h-1zM457 274h1v3h-1zM458 275h1v4h-1zM459 273h1v6h-1zM460 273h1v3h-1zM461 271h1v5h-1zM462 271h1v7h-1zM463 274h1v4h-1zM464 274h1v2h-1zM465 274h1v4h-1zM466 276h1v2h-1zM467 276h1v2h-1zM468 276h1v2h-1zM469 276h1v3h-1zM470 276h1v3h-1zM471 276h1v3h-1zM472 277h1v2h-1zM473 275h1v4h-1zM474 275h1v4h-1zM475 270h1v9h-1zM476 270h1v5h-1zM477 273h1v3h-1zM478 274h1v6h-1zM479 273h1v7h-1zM480 273h1v4h-1zM481 275h1v4h-1zM482 273h1v6h-1zM483 273h1v4h-1zM484 273h1v4h-1zM485 273h1v6h-1zM486 277h1v4h-1zM487 274h1v7h-1zM488 274h1v6h-1zM489 278h1v6h-1zM490 276h1v8h-1zM491 276h1v2h-1zM492 276h1v5h-1zM493 273h1v8h-1zM494 272h1v3h-1zM495 272h1v8h-1zM496 276h1v4h-1zM497 274h1v4h-1zM498 274h1v5h-1zM499 277h1v3h-1zM500 271h1v9h-1zM501 271h1v7h-1zM502 275h1v3h-1zM503 275h1v4h-1zM504 277h1v3h-1zM505 277h1v3h-1zM506 277h1v2h-1zM507 276h1v3h-1zM508 276h1v2h-1zM509 275h1v3h-1zM510 273h1v4h-1zM511 273h1v8h-1zM512 278h1v3h-1zM513 278h1v2h-1zM514 278h1v2h-1zM515 276h1v4h-1zM516 273h1v5h-1z" fill="#f0f"/>
</svg>
<div id="txt" style="left:0;top:0;width:743px;height:449px;will-change:transform">
<span id="t0" class="t" style="left:6.70px;top:10.00px;color:#000;font-weight:bold;letter-spacing:0.88px;">CD</span>
<span id="t1" class="t" style="left:30.70px;top:10.00px;color:#000;font-weight:bold;letter-spacing:0.80px;">Speed</span>
<span id="t2" class="t" style="left:74.70px;top:10.00px;color:#000;font-weight:bold;letter-spacing:-0.70px;">:</span>
<span id="t3" class="t" style="left:84.40px;top:10.00px;color:#000;font-weight:bold;letter-spacing:0.41px;">Disc</span>
<span id="t4" class="t" style="left:116.70px;top:10.00px;color:#000;font-weight:bold;letter-spacing:0.69px;">Quality</span>
<span id="t5" class="t" style="left:168.70px;top:10.00px;color:#000;font-weight:bold;letter-spacing:1.00px;">Test</span>
<span id="t6" class="t" style="left:203.00px;top:10.00px;color:#000;font-weight:bold;letter-spacing:2.50px;">-</span>
<span id="t7" class="t" style="left:216.70px;top:10.00px;color:#000;font-weight:bold;letter-spacing:-0.09px;">BENQ</span>
<span id="t8" class="t" style="left:272.60px;top:10.00px;color:#000;font-weight:bold;letter-spacing:0.29px;">DVD</span>
<span id="t9" class="t" style="left:304.80px;top:10.00px;color:#000;font-weight:bold;letter-spacing:-0.07px;">DD</span>
<span id="t10" class="t" style="left:328.00px;top:10.00px;color:#000;font-weight:bold;letter-spacing:0.55px;">DW1620</span>
<span id="t11" class="t" style="left:399.80px;top:10.00px;color:#000;font-weight:bold;letter-spacing:0.62px;">B7V9</span>
<span id="t12" class="t" style="left:22.50px;top:38.50px;color:#000;letter-spacing:-0.29px;">Disc Quality</span>
<span id="t13" class="t" style="left:36.20px;top:67.10px;color:#000;letter-spacing:-0.51px;">100</span>
<span id="t14" class="t" style="left:42.20px;top:94.10px;color:#000;letter-spacing:-0.43px;">80</span>
<span id="t15" class="t" style="left:42.20px;top:120.10px;color:#000;letter-spacing:-0.43px;">60</span>
<span id="t16" class="t" style="left:42.20px;top:146.10px;color:#000;letter-spacing:-0.43px;">40</span>
<span id="t17" class="t" style="left:42.20px;top:172.10px;color:#000;letter-spacing:-0.43px;">20</span>
<span id="t18" class="t" style="left:532.20px;top:67.10px;color:#000;letter-spacing:-0.43px;">16</span>
<span id="t19" class="t" style="left:532.20px;top:84.10px;color:#000;letter-spacing:-0.43px;">14</span>
<span id="t20" class="t" style="left:532.20px;top:100.10px;color:#000;letter-spacing:-0.43px;">12</span>
<span id="t21" class="t" style="left:532.20px;top:117.10px;color:#000;letter-spacing:-0.43px;">10</span>
<span id="t22" class="t" style="left:532.20px;top:133.10px;color:#000;letter-spacing:-0.19px;">8</span>
<span id="t23" class="t" style="left:532.20px;top:149.10px;color:#000;letter-spacing:-0.19px;">6</span>
<span id="t24" class="t" style="left:532.20px;top:166.10px;color:#000;letter-spacing:-0.19px;">4</span>
<span id="t25" class="t" style="left:532.20px;top:182.10px;color:#000;letter-spacing:-0.19px;">2</span>
<span id="t26" class="t" style="left:42.20px;top:217.10px;color:#000;letter-spacing:-0.43px;">10</span>
<span id="t27" class="t" style="left:48.20px;top:244.10px;color:#000;letter-spacing:-0.19px;">8</span>
<span id="t28" class="t" style="left:48.20px;top:270.10px;color:#000;letter-spacing:-0.19px;">6</span>
<span id="t29" class="t" style="left:48.20px;top:296.10px;color:#000;letter-spacing:-0.19px;">4</span>
<span id="t30" class="t" style="left:48.20px;top:322.10px;color:#000;letter-spacing:-0.19px;">2</span>
<span id="t31" class="t" style="left:532.20px;top:217.10px;color:#000;letter-spacing:-0.43px;">20</span>
<span id="t32" class="t" style="left:532.20px;top:244.10px;color:#000;letter-spacing:-0.43px;">16</span>
<span id="t33" class="t" style="left:532.20px;top:270.10px;color:#000;letter-spacing:-0.43px;">12</span>
<span id="t34" class="t" style="left:532.20px;top:296.10px;color:#000;letter-spacing:-0.19px;">8</span>
<span id="t35" class="t" style="left:532.20px;top:322.10px;color:#000;letter-spacing:-0.19px;">4</span>
<span id="t36" class="t" style="left:55.90px;top:207.00px;color:#000;letter-spacing:-0.83px;">0.0</span>
<span id="t37" class="t" style="left:107.83px;top:207.00px;color:#000;letter-spacing:-0.83px;">0.5</span>
<span id="t38" class="t" style="left:159.75px;top:207.00px;color:#000;letter-spacing:-0.83px;">1.0</span>
<span id="t39" class="t" style="left:211.67px;top:207.00px;color:#000;letter-spacing:-0.83px;">1.5</span>
<span id="t40" class="t" style="left:263.60px;top:207.00px;color:#000;letter-spacing:-0.83px;">2.0</span>
<span id="t41" class="t" style="left:315.52px;top:207.00px;color:#000;letter-spacing:-0.83px;">2.5</span>
<span id="t42" class="t" style="left:367.45px;top:207.00px;color:#000;letter-spacing:-0.83px;">3.0</span>
<span id="t43" class="t" style="left:419.37px;top:207.00px;color:#000;letter-spacing:-0.83px;">3.5</span>
<span id="t44" class="t" style="left:471.30px;top:207.00px;color:#000;letter-spacing:-0.83px;">4.0</span>
<span id="t45" class="t" style="left:523.23px;top:207.00px;color:#000;letter-spacing:-0.83px;">4.5</span>
<span id="t46" class="t" style="left:55.90px;top:357.50px;color:#000;letter-spacing:-0.83px;">0.0</span>
<span id="t47" class="t" style="left:107.83px;top:357.50px;color:#000;letter-spacing:-0.83px;">0.5</span>
<span id="t48" class="t" style="left:159.75px;top:357.50px;color:#000;letter-spacing:-0.83px;">1.0</span>
<span id="t49" class="t" style="left:211.67px;top:357.50px;color:#000;letter-spacing:-0.83px;">1.5</span>
<span id="t50" class="t" style="left:263.60px;top:357.50px;color:#000;letter-spacing:-0.83px;">2.0</span>
<span id="t51" class="t" style="left:315.52px;top:357.50px;color:#000;letter-spacing:-0.83px;">2.5</span>
<span id="t52" class="t" style="left:367.45px;top:357.50px;color:#000;letter-spacing:-0.83px;">3.0</span>
<span id="t53" class="t" style="left:419.37px;top:357.50px;color:#000;letter-spacing:-0.83px;">3.5</span>
<span id="t54" class="t" style="left:471.30px;top:357.50px;color:#000;letter-spacing:-0.83px;">4.0</span>
<span id="t55" class="t" style="left:523.23px;top:357.50px;color:#000;letter-spacing:-0.83px;">4.5</span>
<span id="t56" class="t" style="left:569.40px;top:81.50px;color:#0000ff;"><span style="display:inline-block;transform:scaleX(0.713);transform-origin:0 50%;margin-right:-13.80px">ディスク</span>情報</span>
<span id="t57" class="t" style="left:569.00px;top:94.50px;color:#000;"><span style="display:inline-block;transform:scaleX(0.679);transform-origin:0 50%;margin-right:-11.54px">タイプ</span>:</span>
<span id="t58" class="t" style="left:618.00px;top:94.50px;color:#000080;letter-spacing:0.06px;">DVD-R</span>
<span id="t59" class="t" style="left:569.00px;top:110.00px;color:#000;letter-spacing:-0.78px;">ID:</span>
<span id="t60" class="t" style="left:617.00px;top:110.00px;color:#000080;letter-spacing:-0.95px;">CMC MAG. AE1</span>
<span id="t61" class="t" style="left:569.00px;top:125.00px;color:#000;letter-spacing:-0.45px;">日付:</span>
<span id="t62" class="t" style="left:617.00px;top:125.00px;color:#000080;letter-spacing:0.27px;">n/a</span>
<span id="t63" class="t" style="left:569.00px;top:140.50px;color:#000;letter-spacing:-0.55px;">Label:</span>
<span id="t64" class="t" style="left:617.00px;top:140.50px;color:#000080;letter-spacing:0.27px;">n/a</span>
<span id="t65" class="t" style="left:569.40px;top:154.70px;color:#0000ff;letter-spacing:-0.09px;">Settings</span>
<span id="t66" class="t" style="left:569.00px;top:172.70px;color:#000;letter-spacing:-0.20px;">転送速度</span>
<span id="t67" class="t" style="left:634.70px;top:173.50px;color:#000;letter-spacing:-0.64px;">6 X</span>
<span id="t68" class="t" style="left:569.00px;top:198.00px;color:#000;letter-spacing:0.15px;">開始</span>
<span id="t69" class="t" style="left:634.00px;top:197.00px;color:#000;letter-spacing:-0.72px;">0000 MB</span>
<span id="t70" class="t" style="left:569.00px;top:220.00px;color:#000;letter-spacing:-0.25px;">終了位置</span>
<span id="t71" class="t" style="left:634.00px;top:219.50px;color:#000;letter-spacing:-0.72px;">4488 MB</span>
<span id="t72" class="t" style="left:584.70px;top:242.50px;color:#000;letter-spacing:-0.53px;">Quick Scan</span>
<span id="t73" class="t" style="left:584.70px;top:261.50px;color:#000;letter-spacing:-0.46px;">Show C1/PIE</span>
<span id="t74" class="t" style="left:584.70px;top:276.50px;color:#000;letter-spacing:-0.40px;">Show C2/PIF</span>
<span id="t75" class="t" style="left:584.70px;top:291.50px;color:#000;letter-spacing:-0.19px;">Show Jitter</span>
<span id="t76" class="t" style="left:584.70px;top:306.50px;color:#000;letter-spacing:-0.79px;">Show Read Speed</span>
<span id="t77" class="t" style="left:584.70px;top:321.50px;color:#a0a0a0;letter-spacing:-0.68px;">Show Write Speed</span>
<span id="t78" class="t" style="left:569.00px;top:350.00px;color:#000;">品質<span style="display:inline-block;transform:scaleX(0.674);transform-origin:0 50%;margin-right:-11.74px">スコア</span>:</span>
<span id="t79" class="t" style="left:695.20px;top:350.00px;color:#000080;letter-spacing:-0.58px;">95</span>
<span id="t80" class="t" style="left:569.00px;top:382.00px;color:#000;letter-spacing:-0.31px;">進行状況:</span>
<span id="t81" class="t" style="left:678.90px;top:382.00px;color:#000080;letter-spacing:-1.20px;">100 %</span>
<span id="t82" class="t" style="left:569.00px;top:400.50px;color:#000;"><span style="display:inline-block;transform:scaleX(0.728);transform-origin:0 50%;margin-right:-16.34px">ポジション</span>:</span>
<span id="t83" class="t" style="left:662.00px;top:400.50px;color:#000080;letter-spacing:-0.66px;">4487 MB</span>
<span id="t84" class="t" style="left:569.00px;top:418.50px;color:#000;letter-spacing:-0.28px;">速度:</span>
<span id="t85" class="t" style="left:676.40px;top:418.50px;color:#000080;letter-spacing:-0.62px;">6.25 X</span>
<span id="t86" class="t" style="left:583.50px;top:61.00px;color:#000;letter-spacing:0.25px;">開始</span>
<span id="t87" class="t" style="left:668.00px;top:61.00px;color:#000;letter-spacing:-0.16px;">終了(<u>X</u>)</span>
<span id="t88" class="t" style="left:40.50px;top:368.00px;color:#000;letter-spacing:-0.54px;">PI Errors</span>
<span id="t89" class="t" style="left:27.00px;top:382.30px;color:#000;letter-spacing:-0.45px;">平均:</span>
<span id="t90" class="t" style="left:27.00px;top:400.50px;color:#000;letter-spacing:-0.45px;">最大:</span>
<span id="t91" class="t" style="left:27.00px;top:418.50px;color:#000;letter-spacing:-0.79px;">合計 :</span>
<span id="t92" class="t" style="left:149.70px;top:382.30px;color:#000080;letter-spacing:-0.71px;">32.64</span>
<span id="t93" class="t" style="left:156.40px;top:400.50px;color:#000080;letter-spacing:-0.31px;">100</span>
<span id="t94" class="t" style="left:139.70px;top:418.50px;color:#000080;letter-spacing:-0.59px;">430998</span>
<span id="t95" class="t" style="left:220.30px;top:368.00px;color:#000;letter-spacing:-0.41px;">PI Failures</span>
<span id="t96" class="t" style="left:209.00px;top:382.30px;color:#000;letter-spacing:-0.18px;">平均:</span>
<span id="t97" class="t" style="left:209.00px;top:400.50px;color:#000;letter-spacing:-0.18px;">最大:</span>
<span id="t98" class="t" style="left:209.00px;top:418.50px;color:#000;letter-spacing:-0.67px;">合計 :</span>
<span id="t99" class="t" style="left:338.00px;top:382.30px;color:#000080;letter-spacing:-0.71px;">0.63</span>
<span id="t100" class="t" style="left:351.20px;top:400.50px;color:#000080;letter-spacing:-0.19px;">8</span>
<span id="t101" class="t" style="left:333.70px;top:418.50px;color:#000080;letter-spacing:-0.48px;">5120</span>
<span id="t102" class="t" style="left:402.00px;top:368.00px;color:#000;letter-spacing:0.10px;">Jitter</span>
<span id="t103" class="t" style="left:389.00px;top:382.30px;color:#000;letter-spacing:-0.28px;">平均:</span>
<span id="t104" class="t" style="left:389.00px;top:400.50px;color:#000;letter-spacing:-0.28px;">最大:</span>
<span id="t105" class="t" style="left:501.40px;top:382.30px;color:#000080;letter-spacing:-1.14px;">10.96 %</span>
<span id="t106" class="t" style="left:507.70px;top:400.50px;color:#000080;letter-spacing:-1.20px;">13.5 %</span>
<span id="t107" class="t" style="left:389.50px;top:423.50px;color:#000;letter-spacing:-0.60px;">PO Failures:</span>
<span id="t108" class="t" style="left:532.00px;top:423.50px;color:#000080;letter-spacing:-0.69px;">0</span>
</div>
</body></html>
